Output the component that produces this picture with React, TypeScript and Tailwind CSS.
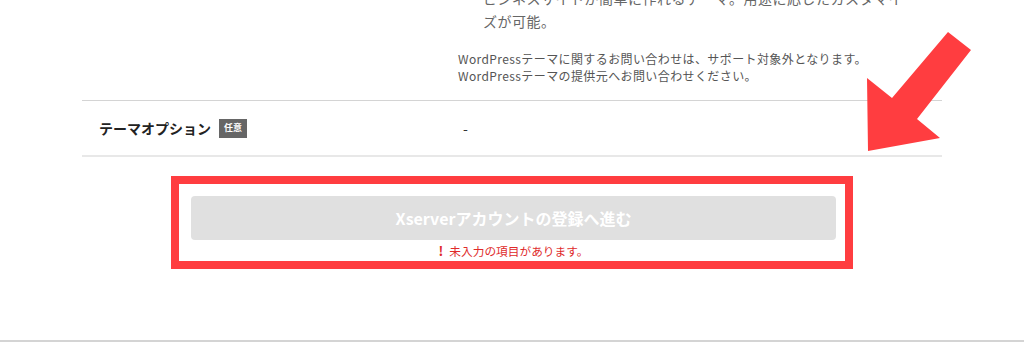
export default function App() {
  return (
    <div
      className="relative h-[354px] w-full overflow-hidden bg-white"
      style={{ fontFamily: '"Noto Sans CJK JP", "Noto Sans", sans-serif' }}
    >
      <div className="mx-auto w-[860px]">
        {/* description block (cut off at top) */}
        <div className="flex">
          <div className="w-[376px] shrink-0" />
          <div className="flex-1">
            <p className="-mt-[13px] pl-[25px] text-[14px] leading-[23px] tracking-[0.5px] text-[#666]">
              ビジネスサイトが簡単に作れるテーマ。用途に応じたカスタマイ
              <br />
              ズが可能。
            </p>
            <p className="mt-[17px] pb-[16px] text-[12px] leading-[17px] tracking-[0.4px] text-[#555]">
              WordPressテーマに関するお問い合わせは、サポート対象外となります。
              <br />
              WordPressテーマの提供元へお問い合わせください。
            </p>
          </div>
        </div>

        {/* theme option row */}
        <div className="flex h-[57px] items-center border-t border-b-2 border-t-[#d4d4d4] border-b-[#e8e8e8]">
          <div className="flex w-[376px] shrink-0 items-center gap-[8px] pl-[17px]">
            <span className="text-[14px] font-bold text-[#222]">テーマオプション</span>
            <span className="flex h-[19px] items-center bg-[#666] px-[5px] text-[9px] font-bold text-white">
              任意
            </span>
          </div>
          <div className="pl-[5px] text-[14px] text-[#333]">-</div>
        </div>
      </div>

      {/* submit area */}
      <div className="mx-auto mt-[19px] w-[682px] border-[8px] border-[#ff3d40] pt-[12px] pb-[2px] pl-[12px] pr-[9px]">
        <button
          disabled
          className="flex h-[44px] w-full items-center justify-center rounded-[4px] bg-[#e0e0e0] text-[16px] font-bold text-white"
        >
          Xserverアカウントの登録へ進む
        </button>
        <p className="mt-[3px] flex items-center justify-center gap-[6px] text-[11.7px] leading-[16px] text-[#e02a2a]">
          <span className="font-bold text-[13px] leading-[16px]">!</span>
          未入力の項目があります。
        </p>
      </div>

      <div className="mt-[71px] h-[2px] w-full bg-[#d4d4d4]" />

      {/* annotation arrow */}
      <svg className="absolute left-0 top-0" width="1024" height="354" viewBox="0 0 1024 354">
        <polygon
          points="948,32 971,50 917,119 940,138 868,151 867,78 892,98"
          fill="#ff3d40"
        />
      </svg>
    </div>
  );
}
